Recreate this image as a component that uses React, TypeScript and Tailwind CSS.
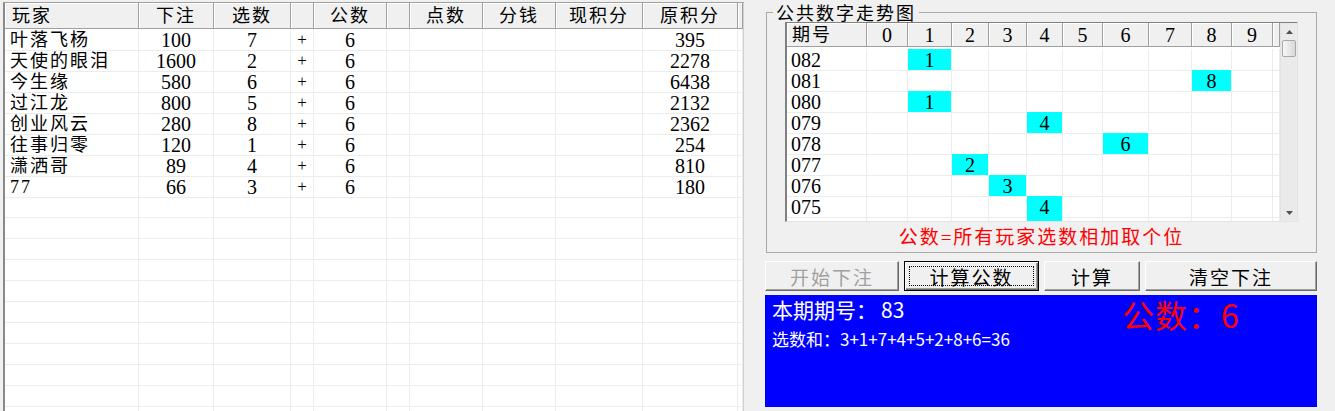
import React from 'react'

const players = [
  { name: '叶落飞杨', bet: 100, pick: 7, orig: 395 },
  { name: '天使的眼泪', bet: 1600, pick: 2, orig: 2278 },
  { name: '今生缘', bet: 580, pick: 6, orig: 6438 },
  { name: '过江龙', bet: 800, pick: 5, orig: 2132 },
  { name: '创业风云', bet: 280, pick: 8, orig: 2362 },
  { name: '往事归零', bet: 120, pick: 1, orig: 254 },
  { name: '潇洒哥', bet: 89, pick: 4, orig: 810 },
  { name: '77', bet: 66, pick: 3, orig: 180 },
]

const trend: [string, number][] = [
  ['082', 1],
  ['081', 8],
  ['080', 1],
  ['079', 4],
  ['078', 6],
  ['077', 2],
  ['076', 3],
  ['075', 4],
  ['074', 4],
  ['073', 3],
]

const LCOLS = 'grid grid-cols-[134px_75px_77px_23px_73px_23px_73px_73px_87px_95px_1fr]'
const TCOLS = 'grid grid-cols-[80px_41px_44px_37px_38px_36px_40px_46px_43px_40px_41px_1fr]'
const headCell = 'flex items-center border-r border-[#a0a0a0] shadow-[inset_1px_1px_0_#fff]'
const bodyCell = 'flex items-center border-r border-b border-[#ececec]'
const cjk = 'text-[18px] tracking-[2px] leading-none'
const num = 'text-[20px] leading-none pt-[1px]'

function PlayerTable() {
  const heads = ['玩家', '下注', '选数', '', '公数', '', '点数', '分钱', '现积分', '原积分', '']
  const rows = Array.from({ length: 19 }, (_, i) => players[i])
  return (
    <div className="flex-1 flex flex-col bg-white border-t border-l-2 border-r border-t-[#a0a0a0] border-l-[#8a8a8a] border-r-[#d0d0d0] overflow-hidden">
      <div className={`${LCOLS} h-[26px] shrink-0 border-b border-[#a0a0a0] bg-[#f0f0f0]`}>
        {heads.map((h, i) => (
          <div key={i} className={`${headCell} ${cjk} ${i === 0 ? 'pl-[7px]' : 'justify-center'}`}>
            {h}
          </div>
        ))}
      </div>
      {rows.map((p, i) => {
        const cells = p
          ? [p.name, p.bet, p.pick, '+', 6, '', '', '', '', p.orig, '']
          : ['', '', '', '', '', '', '', '', '', '', '']
        return (
          <div key={i} className={`${LCOLS} h-[21px] shrink-0`}>
            {cells.map((c, j) => (
              <div
                key={j}
                className={`${bodyCell} ${j === 0 ? `pl-[5px] ${cjk}` : `justify-center ${j === 3 ? 'text-[17px] leading-none' : num}`}`}
              >
                {c}
              </div>
            ))}
          </div>
        )
      })}
    </div>
  )
}

function ScrollBar() {
  return (
    <div className="w-[17px] shrink-0 flex flex-col bg-[#eaeaea] border-l border-[#e2e2e2]">
      <div className="h-[17px] flex items-center justify-center">
        <svg width="7" height="4" viewBox="0 0 7 4">
          <path d="M3.5 0L7 4H0z" fill="#505050" />
        </svg>
      </div>
      <div className="mx-[1px] h-[17px] rounded-[2px] border border-[#a8a8a8] bg-gradient-to-r from-[#f7f7f7] to-[#d8d8d8]" />
      <div className="flex-1" />
      <div className="h-[17px] flex items-center justify-center">
        <svg width="7" height="4" viewBox="0 0 7 4">
          <path d="M0 0H7L3.5 4z" fill="#505050" />
        </svg>
      </div>
    </div>
  )
}

function TrendGrid() {
  const heads = ['期号', '0', '1', '2', '3', '4', '5', '6', '7', '8', '9', '']
  return (
    <div className="h-[200px] flex bg-white border-t border-l-2 border-r border-b border-t-[#808080] border-l-[#808080] border-r-[#e4e4e4] border-b-[#e4e4e4]">
      <div className="flex-1 flex flex-col overflow-hidden">
        <div className={`${TCOLS} h-[24px] shrink-0 border-b border-[#a0a0a0] bg-[#f0f0f0]`}>
          {heads.map((h, i) => (
            <div key={i} className={`${headCell} ${i === 0 ? `pl-[5px] ${cjk}` : `justify-center ${num}`}`}>
              {h}
            </div>
          ))}
        </div>
        <div className="h-[2px] shrink-0" />
        <div className="flex-1 overflow-hidden">
          {trend.map(([period, n]) => (
            <div key={period} className={`${TCOLS} h-[21px]`}>
              <div className={`${bodyCell} pl-[4px] ${num}`}>{period}</div>
              {Array.from({ length: 10 }, (_, d) => (
                <div key={d} className={`${bodyCell} justify-center ${num} ${d === n ? 'bg-[#00ffff]' : ''}`}>
                  {d === n ? d : ''}
                </div>
              ))}
              <div className={bodyCell} />
            </div>
          ))}
        </div>
      </div>
      <ScrollBar />
    </div>
  )
}

function Btn({ label, w, disabled, primary }: { label: string; w: string; disabled?: boolean; primary?: boolean }) {
  if (primary) {
    return (
      <button
        type="button"
        className={`${w} h-full flex p-[4px] bg-[#f0f0f0] border border-black shadow-[inset_1px_1px_0_#fff,inset_-1px_-1px_0_#696969,inset_-2px_-2px_0_#a0a0a0]`}
      >
        <span className="flex-1 flex items-center justify-center border border-dotted border-black text-[19px] tracking-[2px] leading-none">
          {label}
        </span>
      </button>
    )
  }
  return (
    <button
      type="button"
      className={`${w} h-full flex items-center justify-center bg-[#f0f0f0] border border-t-white border-l-white border-r-[#696969] border-b-[#696969] shadow-[inset_-1px_-1px_0_#a0a0a0] text-[19px] tracking-[2px] leading-none ${disabled ? 'text-[#a0a0a0]' : 'text-black'}`}
    >
      {label}
    </button>
  )
}

export default function App() {
  return (
    <div className="w-[1335px] h-[411px] flex overflow-hidden bg-[#f0f0f0] text-black font-['Liberation_Serif','Noto_Sans_CJK_SC',serif]">
      <div className="w-[744px] shrink-0 flex pt-[2px] pl-[3px]">
        <PlayerTable />
      </div>

      <div className="w-[591px] shrink-0 flex flex-col pt-[2px] pl-[21px] pr-[18px]">
        <fieldset className="ml-[1px] border border-[#a8a8a8]">
          <legend className="ml-[6px] px-[3px] text-[18px] tracking-[2px] leading-[20px] font-['Noto_Sans_CJK_SC',sans-serif]">
            公共数字走势图
          </legend>
          <div className="px-[18px]">
            <TrendGrid />
            <div className="h-[30px] flex items-center justify-center text-[#ff0000] text-[19px] tracking-[2px] leading-none">
              公数=所有玩家选数相加取个位
            </div>
          </div>
        </fieldset>

        <div className="mt-[8px] h-[30px] flex gap-[5px] font-['Noto_Sans_CJK_SC',sans-serif]">
          <Btn label="开始下注" w="w-[134px]" disabled />
          <Btn label="计算公数" w="w-[135px]" primary />
          <Btn label="计算" w="w-[96px]" />
          <Btn label="清空下注" w="w-[172px]" />
        </div>

        <div className="mt-[4px] h-[112px] bg-[#0000ff] grid grid-cols-[357px_1fr] pt-[2px] font-['Noto_Sans_CJK_SC',sans-serif]">
          <div className="pl-[7px] text-white">
            <div className="text-[21px] leading-[24px]">
              本期期号：<span className="ml-[4px]">83</span>
            </div>
            <div className="mt-[8px] text-[17px] leading-[20px]">选数和：3+1+7+4+5+2+8+6=36</div>
          </div>
          <div className="text-[#ff0000] text-[32px] leading-[34px] tracking-[1px]">公数：6</div>
        </div>
      </div>
    </div>
  )
}
